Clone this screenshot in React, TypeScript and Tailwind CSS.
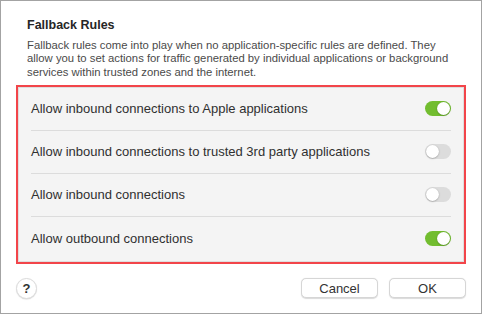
import React from 'react';

const rules = [
  { label: 'Allow inbound connections to Apple applications', on: true },
  { label: 'Allow inbound connections to trusted 3rd party applications', on: false },
  { label: 'Allow inbound connections', on: false },
  { label: 'Allow outbound connections', on: true },
];

const intro = [
  'Fallback rules come into play when no application-specific rules are defined. They',
  'allow you to set actions for traffic generated by individual applications or background',
  'services within trusted zones and the internet.',
];

function Toggle({ on }: { on: boolean }) {
  return (
    <div
      className={
        on
          ? 'relative w-[26px] h-[15px] rounded-full bg-[#72bd2f]'
          : 'relative w-[26px] h-[15px] rounded-full bg-[#dcdcdc]'
      }
    >
      <div
        className={
          on
            ? 'absolute top-[1px] right-[1px] w-[13px] h-[13px] rounded-full bg-white shadow-[0_0.5px_1.5px_rgba(0,0,0,0.35)]'
            : 'absolute top-[1px] left-[1px] w-[13px] h-[13px] rounded-full bg-white shadow-[0_0.5px_1.5px_rgba(0,0,0,0.35)]'
        }
      />
    </div>
  );
}

export default function App() {
  return (
    <div
      className="w-[482px] h-[314px] bg-white border border-[#a3a3a3] flex flex-col text-[#2b2b2b]"
      style={{ fontFamily: '"Liberation Sans", Arial, sans-serif' }}
    >
      <div className="px-[26px] pt-[16px] text-[12.5px] leading-[16px] font-bold text-[#262626]">
        Fallback Rules
      </div>
      <div className="px-[26px] mt-[6px] text-[11.3px] leading-[13.3px] text-[#4a4a4a]">
        {intro.map((line) => (
          <div key={line} className="whitespace-nowrap">
            {line}
          </div>
        ))}
      </div>

      <div className="mx-[15px] mt-[6px] border-2 border-[#f2454a]">
        <div className="bg-[#f4f4f4] border border-[#dedede] px-[12px]">
          {rules.map((r, i) => (
            <div
              key={r.label}
              className={
                i < rules.length - 1
                  ? 'h-[43px] flex items-center justify-between border-b border-[#dcdcdc]'
                  : 'h-[44px] flex items-center justify-between'
              }
            >
              <span className="text-[13px] text-[#303030]">{r.label}</span>
              <Toggle on={r.on} />
            </div>
          ))}
        </div>
      </div>

      <div className="px-[15px] mt-[14px] flex items-center justify-between">
        <button className="w-[21px] h-[21px] rounded-full bg-white border border-[#dcdcdc] shadow-[0_0.5px_1px_rgba(0,0,0,0.15)] flex items-center justify-center text-[13px] font-semibold text-[#333]">
          ?
        </button>
        <div className="flex items-center gap-[11px]">
          <button className="w-[77px] h-[20px] rounded-[5px] bg-white border border-[#d6d6d6] shadow-[0_0.5px_1px_rgba(0,0,0,0.15)] text-[13px] text-[#333]">
            Cancel
          </button>
          <button className="w-[77px] h-[20px] rounded-[5px] bg-white border border-[#d6d6d6] shadow-[0_0.5px_1px_rgba(0,0,0,0.15)] text-[13px] text-[#333]">
            OK
          </button>
        </div>
      </div>
    </div>
  );
}
